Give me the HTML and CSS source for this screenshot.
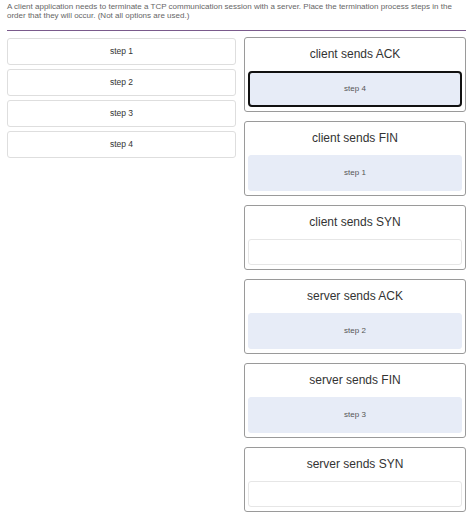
FILE: index.html
```html
<!doctype html>
<html lang="en">
<head>
	<meta charset="utf-8">
	<meta name="viewport" content="width=device-width, initial-scale=1">
	<title>TCP termination</title>
	<link rel="stylesheet" href="styles.css">
</head>
<body>
	<header class="question">
		<p>A client application needs to terminate a TCP communication session with a server. Place the termination process steps in the order that they will occur. (Not all options are used.)</p>
	</header>

	<main class="board">
		<section class="options">
			<div class="option">step 1</div>
			<div class="option">step 2</div>
			<div class="option">step 3</div>
			<div class="option">step 4</div>
		</section>

		<section class="targets">
			<div class="target">
				<h3>client sends ACK</h3>
				<div class="drop filled active">step 4</div>
			</div>
			<div class="target">
				<h3>client sends FIN</h3>
				<div class="drop filled">step 1</div>
			</div>
			<div class="target">
				<h3>client sends SYN</h3>
				<div class="drop"></div>
			</div>
			<div class="target">
				<h3>server sends ACK</h3>
				<div class="drop filled">step 2</div>
			</div>
			<div class="target">
				<h3>server sends FIN</h3>
				<div class="drop filled">step 3</div>
			</div>
			<div class="target">
				<h3>server sends SYN</h3>
				<div class="drop"></div>
			</div>
		</section>
	</main>
</body>
</html>
```

FILE: styles.css
```css
:root {
	--line: #7a5a8c;
	--box-border: #9a9a9a;
	--soft-border: #dedede;
	--fill: #e7ecf7;
}

body {
	margin: 0;
	padding: 0 8px 0 7px;
	font-family: "Liberation Sans", Arial, sans-serif;
	color: #333;
	background: #fff;
}

.question {
	padding-top: 2px;
	padding-bottom: 10px;
	border-bottom: 1.5px solid var(--line);
}
.question p {
	margin: 0;
	font-size: 8px;
	line-height: 9px;
	color: #666;
}

.board {
	display: flex;
	gap: 8px;
	padding-top: 6px;
}

.options {
	width: 229px;
	display: flex;
	flex-direction: column;
	gap: 4px;
	padding-top: 1px;
}
.option {
	height: 25px;
	line-height: 25px;
	border: 1px solid var(--soft-border);
	border-radius: 3px;
	text-align: center;
	font-size: 8.5px;
	color: #333;
}

.targets {
	flex: 1;
	display: flex;
	flex-direction: column;
	gap: 9px;
}
.target {
	border: 1px solid var(--box-border);
	border-radius: 3px;
	padding: 0 3px 4px;
}
.target h3 {
	margin: 0;
	height: 33px;
	line-height: 32px;
	text-align: center;
	font-weight: normal;
	font-size: 12px;
	color: #333;
}
.drop {
	height: 24px;
	border: 1px solid #e6e6e6;
	border-radius: 3px;
	text-align: center;
	font-size: 8px;
	color: #555;
}
.drop.filled {
	height: 34px;
	line-height: 34px;
	border-color: var(--fill);
	background: var(--fill);
}
.drop.active {
	height: 32px;
	line-height: 32px;
	border: 2px solid #111;
	border-radius: 4px;
}
```
